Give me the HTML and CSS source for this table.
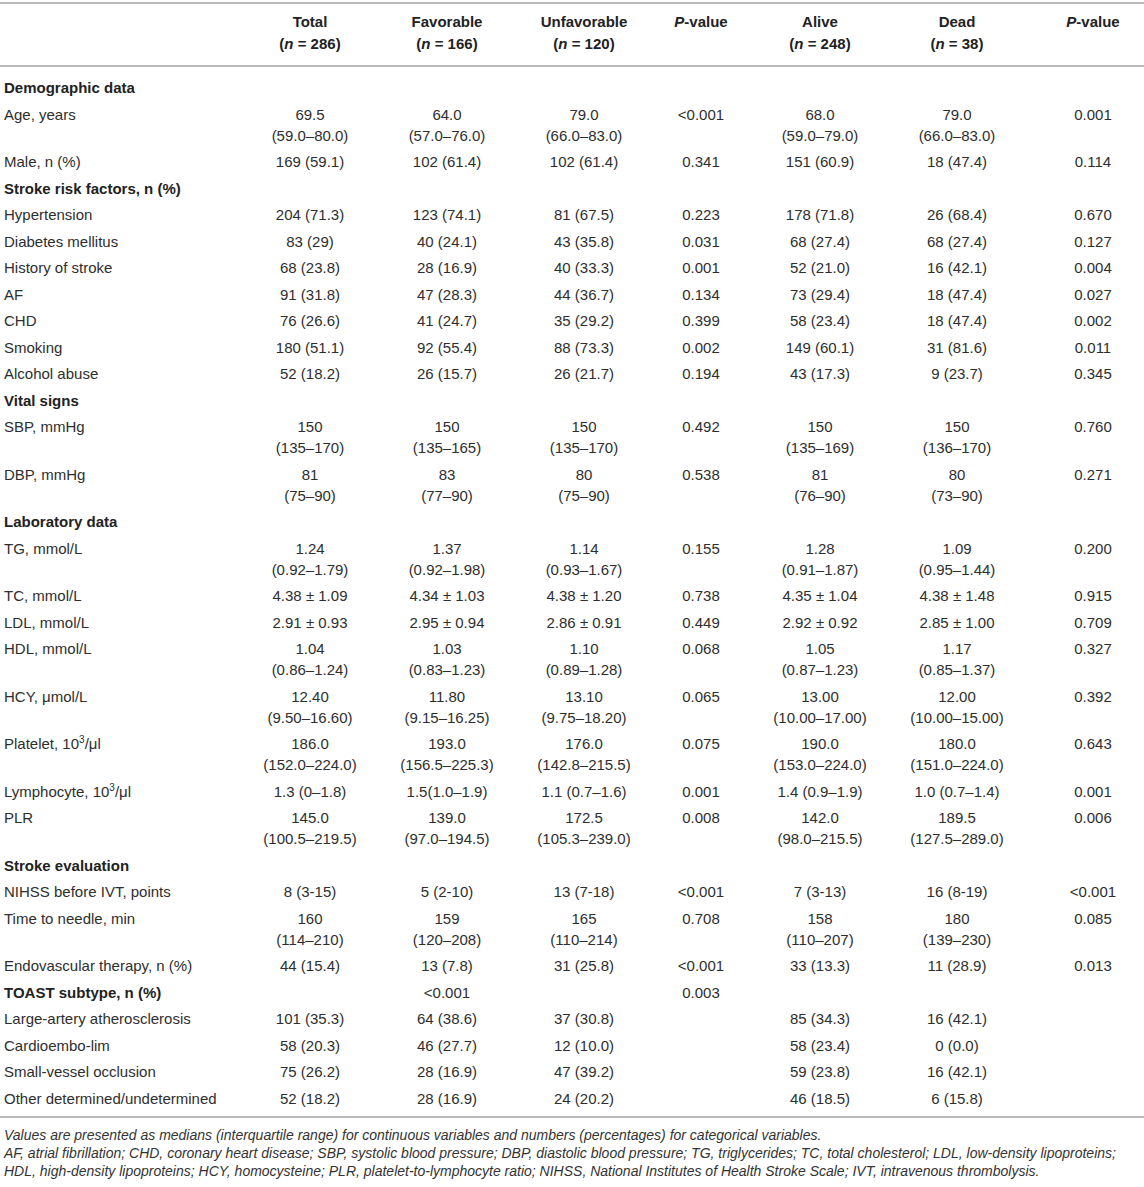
FILE: index.html
```html
<!DOCTYPE html>
<html lang="en">
<head>
    <meta charset="UTF-8">
    <meta name="viewport" content="width=device-width, initial-scale=1.0">
    <title>Baseline characteristics</title>
    <link rel="stylesheet" href="styles.css">
</head>
<body>
    <table class="data-table">
        <colgroup>
            <col class="c-label">
            <col class="c-total">
            <col class="c-fav">
            <col class="c-unfav">
            <col class="c-p1">
            <col class="c-alive">
            <col class="c-dead">
            <col class="c-p2">
        </colgroup>
        <thead>
            <tr>
                <th></th>
                <th>Total<br>(<i>n</i> = 286)</th>
                <th>Favorable<br>(<i>n</i> = 166)</th>
                <th>Unfavorable<br>(<i>n</i> = 120)</th>
                <th><i>P</i>-value</th>
                <th>Alive<br>(<i>n</i> = 248)</th>
                <th>Dead<br>(<i>n</i> = 38)</th>
                <th class="last"><i>P</i>-value</th>
            </tr>
        </thead>
        <tbody>
            <tr class="first"><td class="section" colspan="8">Demographic data</td></tr>
            <tr><td>Age, years</td><td>69.5<br>(59.0–80.0)</td><td>64.0<br>(57.0–76.0)</td><td>79.0<br>(66.0–83.0)</td><td>&lt;0.001</td><td>68.0<br>(59.0–79.0)</td><td>79.0<br>(66.0–83.0)</td><td class="last">0.001</td></tr>
            <tr><td>Male, n (%)</td><td>169 (59.1)</td><td>102 (61.4)</td><td>102 (61.4)</td><td>0.341</td><td>151 (60.9)</td><td>18 (47.4)</td><td class="last">0.114</td></tr>

            <tr><td class="section" colspan="8">Stroke risk factors, n (%)</td></tr>
            <tr><td>Hypertension</td><td>204 (71.3)</td><td>123 (74.1)</td><td>81 (67.5)</td><td>0.223</td><td>178 (71.8)</td><td>26 (68.4)</td><td class="last">0.670</td></tr>
            <tr><td>Diabetes mellitus</td><td>83 (29)</td><td>40 (24.1)</td><td>43 (35.8)</td><td>0.031</td><td>68 (27.4)</td><td>68 (27.4)</td><td class="last">0.127</td></tr>
            <tr><td>History of stroke</td><td>68 (23.8)</td><td>28 (16.9)</td><td>40 (33.3)</td><td>0.001</td><td>52 (21.0)</td><td>16 (42.1)</td><td class="last">0.004</td></tr>
            <tr><td>AF</td><td>91 (31.8)</td><td>47 (28.3)</td><td>44 (36.7)</td><td>0.134</td><td>73 (29.4)</td><td>18 (47.4)</td><td class="last">0.027</td></tr>
            <tr><td>CHD</td><td>76 (26.6)</td><td>41 (24.7)</td><td>35 (29.2)</td><td>0.399</td><td>58 (23.4)</td><td>18 (47.4)</td><td class="last">0.002</td></tr>
            <tr><td>Smoking</td><td>180 (51.1)</td><td>92 (55.4)</td><td>88 (73.3)</td><td>0.002</td><td>149 (60.1)</td><td>31 (81.6)</td><td class="last">0.011</td></tr>
            <tr><td>Alcohol abuse</td><td>52 (18.2)</td><td>26 (15.7)</td><td>26 (21.7)</td><td>0.194</td><td>43 (17.3)</td><td>9 (23.7)</td><td class="last">0.345</td></tr>

            <tr><td class="section" colspan="8">Vital signs</td></tr>
            <tr><td>SBP, mmHg</td><td>150<br>(135–170)</td><td>150<br>(135–165)</td><td>150<br>(135–170)</td><td>0.492</td><td>150<br>(135–169)</td><td>150<br>(136–170)</td><td class="last">0.760</td></tr>
            <tr><td>DBP, mmHg</td><td>81<br>(75–90)</td><td>83<br>(77–90)</td><td>80<br>(75–90)</td><td>0.538</td><td>81<br>(76–90)</td><td>80<br>(73–90)</td><td class="last">0.271</td></tr>

            <tr><td class="section" colspan="8">Laboratory data</td></tr>
            <tr><td>TG, mmol/L</td><td>1.24<br>(0.92–1.79)</td><td>1.37<br>(0.92–1.98)</td><td>1.14<br>(0.93–1.67)</td><td>0.155</td><td>1.28<br>(0.91–1.87)</td><td>1.09<br>(0.95–1.44)</td><td class="last">0.200</td></tr>
            <tr><td>TC, mmol/L</td><td>4.38 ± 1.09</td><td>4.34 ± 1.03</td><td>4.38 ± 1.20</td><td>0.738</td><td>4.35 ± 1.04</td><td>4.38 ± 1.48</td><td class="last">0.915</td></tr>
            <tr><td>LDL, mmol/L</td><td>2.91 ± 0.93</td><td>2.95 ± 0.94</td><td>2.86 ± 0.91</td><td>0.449</td><td>2.92 ± 0.92</td><td>2.85 ± 1.00</td><td class="last">0.709</td></tr>
            <tr><td>HDL, mmol/L</td><td>1.04<br>(0.86–1.24)</td><td>1.03<br>(0.83–1.23)</td><td>1.10<br>(0.89–1.28)</td><td>0.068</td><td>1.05<br>(0.87–1.23)</td><td>1.17<br>(0.85–1.37)</td><td class="last">0.327</td></tr>
            <tr><td>HCY, μmol/L</td><td>12.40<br>(9.50–16.60)</td><td>11.80<br>(9.15–16.25)</td><td>13.10<br>(9.75–18.20)</td><td>0.065</td><td>13.00<br>(10.00–17.00)</td><td>12.00<br>(10.00–15.00)</td><td class="last">0.392</td></tr>
            <tr><td>Platelet, 10<sup>3</sup>/μl</td><td>186.0<br>(152.0–224.0)</td><td>193.0<br>(156.5–225.3)</td><td>176.0<br>(142.8–215.5)</td><td>0.075</td><td>190.0<br>(153.0–224.0)</td><td>180.0<br>(151.0–224.0)</td><td class="last">0.643</td></tr>
            <tr><td>Lymphocyte, 10<sup>3</sup>/μl</td><td>1.3 (0–1.8)</td><td>1.5(1.0–1.9)</td><td>1.1 (0.7–1.6)</td><td>0.001</td><td>1.4 (0.9–1.9)</td><td>1.0 (0.7–1.4)</td><td class="last">0.001</td></tr>
            <tr><td>PLR</td><td>145.0<br>(100.5–219.5)</td><td>139.0<br>(97.0–194.5)</td><td>172.5<br>(105.3–239.0)</td><td>0.008</td><td>142.0<br>(98.0–215.5)</td><td>189.5<br>(127.5–289.0)</td><td class="last">0.006</td></tr>

            <tr><td class="section" colspan="8">Stroke evaluation</td></tr>
            <tr><td>NIHSS before IVT, points</td><td>8 (3-15)</td><td>5 (2-10)</td><td>13 (7-18)</td><td>&lt;0.001</td><td>7 (3-13)</td><td>16 (8-19)</td><td class="last">&lt;0.001</td></tr>
            <tr><td>Time to needle, min</td><td>160<br>(114–210)</td><td>159<br>(120–208)</td><td>165<br>(110–214)</td><td>0.708</td><td>158<br>(110–207)</td><td>180<br>(139–230)</td><td class="last">0.085</td></tr>
            <tr><td>Endovascular therapy, n (%)</td><td>44 (15.4)</td><td>13 (7.8)</td><td>31 (25.8)</td><td>&lt;0.001</td><td>33 (13.3)</td><td>11 (28.9)</td><td class="last">0.013</td></tr>

            <tr><td class="section">TOAST subtype, n (%)</td><td></td><td>&lt;0.001</td><td></td><td>0.003</td><td></td><td></td><td class="last"></td></tr>
            <tr><td>Large-artery atherosclerosis</td><td>101 (35.3)</td><td>64 (38.6)</td><td>37 (30.8)</td><td></td><td>85 (34.3)</td><td>16 (42.1)</td><td class="last"></td></tr>
            <tr><td>Cardioembo-lim</td><td>58 (20.3)</td><td>46 (27.7)</td><td>12 (10.0)</td><td></td><td>58 (23.4)</td><td>0 (0.0)</td><td class="last"></td></tr>
            <tr><td>Small-vessel occlusion</td><td>75 (26.2)</td><td>28 (16.9)</td><td>47 (39.2)</td><td></td><td>59 (23.8)</td><td>16 (42.1)</td><td class="last"></td></tr>
            <tr class="end"><td>Other determined/undetermined</td><td>52 (18.2)</td><td>28 (16.9)</td><td>24 (20.2)</td><td></td><td>46 (18.5)</td><td>6 (15.8)</td><td class="last"></td></tr>
        </tbody>
    </table>

    <p class="notes">
        Values are presented as medians (interquartile range) for continuous variables and numbers (percentages) for categorical variables.<br>
        AF, atrial fibrillation; CHD, coronary heart disease; SBP, systolic blood pressure; DBP, diastolic blood pressure; TG, triglycerides; TC, total cholesterol; LDL, low-density lipoproteins;<br>
        HDL, high-density lipoproteins; HCY, homocysteine; PLR, platelet-to-lymphocyte ratio; NIHSS, National Institutes of Health Stroke Scale; IVT, intravenous thrombolysis.
    </p>
</body>
</html>
```

FILE: styles.css
```css
body {
    margin: 0;
    padding-top: 2px;
    font-family: "Liberation Sans", Arial, sans-serif;
    color: #2e2e2e;
    background: #fff;
}

.data-table {
    width: 1144px;
    table-layout: fixed;
    border-collapse: collapse;
    font-size: 15px;
}

.c-label { width: 242px; }
.c-total { width: 136px; }
.c-fav { width: 138px; }
.c-unfav { width: 136px; }
.c-p1 { width: 98px; }
.c-alive { width: 140px; }
.c-dead { width: 134px; }
.c-p2 { width: 120px; }

thead tr {
    border-top: 2px solid #b9b9b9;
    border-bottom: 2px solid #b9b9b9;
}

th {
    font-weight: bold;
    color: #222;
    text-align: center;
    vertical-align: top;
    line-height: 22px;
    padding: 7px 0 10px;
    white-space: nowrap;
}

td {
    text-align: center;
    vertical-align: top;
    line-height: 21px;
    padding: 3px 0 2.5px;
    white-space: nowrap;
}

td:first-child {
    text-align: left;
    padding-left: 4px;
}

.data-table .last {
    padding-left: 18px;
}

td.section {
    font-weight: bold;
    color: #222;
}

tr.first td {
    padding-top: 10px;
}

tr.end td {
    padding-bottom: 7px;
}

tbody tr.end {
    border-bottom: 2px solid #b9b9b9;
}

sup {
    font-size: 10px;
    line-height: 0;
    vertical-align: 6px;
}

.notes {
    margin: 0;
    padding: 8px 0 0 4px;
    font-size: 14px;
    line-height: 18px;
    font-style: italic;
    color: #333;
    white-space: nowrap;
}
```
